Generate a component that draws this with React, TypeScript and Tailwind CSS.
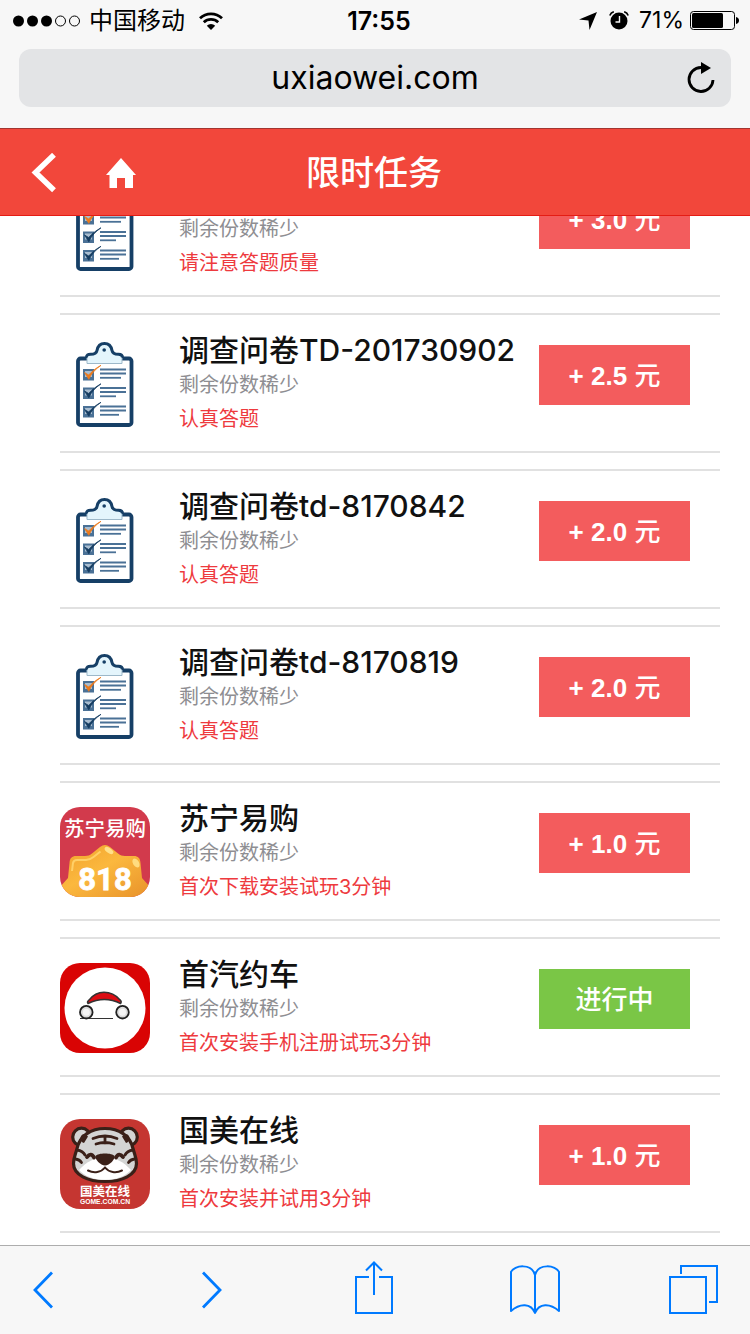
import React from "react";

type IconKind = "survey" | "suning" | "shouqi" | "gome";

interface Task {
  icon: IconKind;
  title: string;
  note: string;
  reward?: string;
}

const tasks: Task[] = [
  { icon: "survey", title: "调查问卷TD-201730903", note: "请注意答题质量", reward: "3.0" },
  { icon: "survey", title: "调查问卷TD-201730902", note: "认真答题", reward: "2.5" },
  { icon: "survey", title: "调查问卷td-8170842", note: "认真答题", reward: "2.0" },
  { icon: "survey", title: "调查问卷td-8170819", note: "认真答题", reward: "2.0" },
  { icon: "suning", title: "苏宁易购", note: "首次下载安装试玩3分钟", reward: "1.0" },
  { icon: "shouqi", title: "首汽约车", note: "首次安装手机注册试玩3分钟" },
  { icon: "gome", title: "国美在线", note: "首次安装并试用3分钟", reward: "1.0" },
];

const cjk = "'Noto Sans CJK SC', sans-serif";

function SurveyIcon() {
  const rows = [30, 48.5, 67];
  return (
    <svg viewBox="0 0 90 90" className="size-[90px]" aria-hidden="true">
      <rect x="18" y="19.5" width="53.5" height="66.5" rx="2.5" fill="#fff" stroke="#163f66" strokeWidth="3.8" />
      <path
        d="M27 24.5v-5c0-2.500 1-3.700 3.500-3.900 3.500-.200 6-.900 6.500-3.800.800-5 3.500-8 7.500-8s6.700 3 7.500 8c.500 2.900 3 3.600 6.500 3.800 2.500.200 3.500 1.400 3.500 3.900v5z"
        fill="#e4f5fc"
      />
      <path
        d="M26.500 18.500c0-2.500 1.500-3.300 4-3.300 4 0 6-1 6.500-3.800.800-4.600 3.500-7 7.500-7s6.700 2.400 7.500 7c.500 2.800 2.500 3.800 6.500 3.800 2.500 0 4 .800 4 3.300"
        fill="none" stroke="#163f66" strokeWidth="3"
      />
      <path d="M27 19v5.500h35V19" fill="none" stroke="#9db8c9" strokeWidth="1" />
      <circle cx="44.200" cy="11" r="1.800" fill="#163f66" />
      {rows.map((y, i) => (
        <g key={y}>
          <rect x="23" y={y} width="11" height="11.500" fill="#4a7196" />
          <rect x="25" y={y + 2} width="7" height="6" fill="#a9bdd0" />
          <path
            d={`M24.500 ${y + 3.500}l4.300 6.800c2.500-5.800 6.500-10 12.200-14-5.400 3-9.200 6.200-12.300 9.700z`}
            fill={i === 0 ? "#ec7a1c" : "#153c61"}
            stroke={i === 0 ? "#ec7a1c" : "#153c61"}
            strokeWidth=".8"
          />
          <path d={`M40 ${y + 0.5}h26M40 ${y + 4.5}h26`} stroke="#4a7196" strokeWidth="1.800" />
          <path d={`M40 ${y + 8.800}h${i === 0 ? 21 : i === 1 ? 16 : 19}`} stroke="#4a7196" strokeWidth="1.800" />
        </g>
      ))}
    </svg>
  );
}

function SuningIcon() {
  return (
    <svg viewBox="0 0 90 90" className="size-[90px] rounded-[20px]" aria-hidden="true">
      <defs>
        <linearGradient id="gold" x1="0" y1="0" x2="1" y2="1">
          <stop offset="0" stopColor="#f0a02c" />
          <stop offset=".45" stopColor="#fbb83e" />
          <stop offset="1" stopColor="#e8922a" />
        </linearGradient>
      </defs>
      <rect width="90" height="90" fill="#d23a4c" />
      <path
        d="M0 80l8-9 1.500-15c.3-5 2.500-7 6.500-7h9c3 0 4.500-.700 7-2.500l8-6.500c3.500-2.700 6.500-2.700 10 0l8 6.500c2.500 1.800 4 2.500 7 2.500h9c4 0 6.200 2 6.500 7L82 71l8 9v10H0z"
        fill="url(#gold)"
      />
      <path d="M12 64l1-8c.5-2 1.500-3 4-3h9c3 0 5-1 7.500-3l7-5.500" fill="none" stroke="#ffd067" strokeWidth="2" />
      <ellipse cx="49" cy="43.500" rx="5" ry="2.500" fill="#ffe08a" transform="rotate(35 49 43.500)" />
      <ellipse cx="76" cy="56" rx="3" ry="5" fill="#ffdc80" transform="rotate(-30 76 56)" />
      <text x="45" y="29" textAnchor="middle" fontFamily={cjk} fontSize="20.500" fontWeight="500" fill="#fff">苏宁易购</text>
      <text
        x="45" y="83" textAnchor="middle"
        fontFamily="Roboto, sans-serif" fontSize="31" fontWeight="700"
        fill="#fff" stroke="#fff" strokeWidth=".8"
      >
        818
      </text>
    </svg>
  );
}

function ShouqiIcon() {
  return (
    <svg viewBox="0 0 90 90" className="size-[90px] rounded-[20px]" aria-hidden="true">
      <rect width="90" height="90" fill="#d90404" />
      <circle cx="45" cy="45" r="40.500" fill="#fff" />
      <path d="M20 55.500h33" stroke="#333" strokeWidth="1" />
      <path
        d="M28 40.500c-1.200-1.500-.3-2.400.9-3.400C33 32 37.500 29.300 44 29.300s12 3 16.100 7.600c1 1 1.700 2 .5 3.600-10.500-5.200-22-5.200-32.600 0z"
        fill="#dc0d14" stroke="#333" strokeWidth="1.500" strokeLinejoin="round"
      />
      <circle cx="26.300" cy="49.200" r="6.300" fill="#dcdcdc" stroke="#202020" strokeWidth="1.800" />
      <circle cx="62.500" cy="49.200" r="6.300" fill="#dcdcdc" stroke="#202020" strokeWidth="1.800" />
      <circle cx="26.300" cy="49.200" r="3.500" fill="#f5f5f5" />
      <circle cx="62.500" cy="49.200" r="3.500" fill="#f5f5f5" />
    </svg>
  );
}

function GomeIcon() {
  return (
    <svg viewBox="0 0 90 90" className="size-[90px] rounded-[20px]" aria-hidden="true">
      <rect width="90" height="90" fill="#c53631" />
      <g fill="#d3d4d3" stroke="#3a2018" strokeWidth="3.200">
        <circle cx="21.500" cy="18" r="8.800" />
        <circle cx="68.500" cy="18" r="8.800" />
        <path d="M45 9.500c-14 0-25 7-28 20-1.500 6-3.500 9-3.500 15C13.500 56 28 62.500 45 62.500S76.500 56 76.500 44.500c0-6-2-9-3.500-15-3-13-14-20-28-20z" />
      </g>
      <path d="M24 24c-4-1-5-6-1.500-8.500 1.500-1 4 .5 5.500 2zM66 24c4-1 5-6 1.500-8.500-1.500-1-4 .5-5.500 2z" fill="#3a2018" />
      <path d="M45 38c-9 0-19 5-26 13 6 6.500 15 9.800 26 9.800s20-3.300 26-9.800c-7-8-17-13-26-13z" fill="#fff" />
      <g fill="none" stroke="#3a2018" strokeWidth="2.800" strokeLinecap="round">
        <path d="M33 19.500q12-5 24 0M36 25q9-3 18 0M45 18v6" />
        <path d="M17 31q6 1 8 5M73 31q-6 1-8 5M15.500 40q4 .5 6 3.500M74.500 40q-4 .5-6 3.500" />
        <path d="M27 38q4-5 7 .5M56 38.500q3-5.500 7-.5" strokeWidth="3.800" />
        <path d="M28 51.500c6 3 13 2 17-3 4 5 11 6 17 3" strokeWidth="2" />
      </g>
      <path d="M35.500 37c2-3.500 17-3.500 19 0 1 3-5 9.500-9.500 9.500S34.500 40 35.500 37z" fill="#3a2018" />
      <text x="45" y="77" textAnchor="middle" fontFamily={cjk} fontSize="12.500" fontWeight="700" fill="#fff">国美在线</text>
      <text x="45" y="84.800" textAnchor="middle" fontFamily="'Liberation Sans', sans-serif" fontSize="6.800" fontWeight="700" fill="#fff">GOME.COM.CN</text>
    </svg>
  );
}

const icons: Record<IconKind, () => React.ReactElement> = {
  survey: SurveyIcon,
  suning: SuningIcon,
  shouqi: ShouqiIcon,
  gome: GomeIcon,
};

function StatusBar() {
  return (
    <div className="grid h-[41px] grid-cols-[1fr_auto_1fr] items-center pr-[11px] pl-[13px] text-2xl">
      <div className="flex items-center">
        <svg viewBox="0 0 68 12" className="h-3 w-[68px]" aria-label="信号">
          <circle cx="5.500" cy="6" r="5.500" />
          <circle cx="19.500" cy="6" r="5.500" />
          <circle cx="33.500" cy="6" r="5.500" />
          <circle cx="47.500" cy="6" r="5" fill="none" stroke="#000" />
          <circle cx="61.500" cy="6" r="5" fill="none" stroke="#000" />
        </svg>
        <span className="ml-2">中国移动</span>
        <svg viewBox="0 0 24 18" className="ml-3.5 h-[18px] w-6" aria-label="Wi-Fi">
          <path d="M1 6.300a16 16 0 0 1 22 0M4.800 10.200a10.500 10.500 0 0 1 14.400 0" fill="none" stroke="#000" strokeWidth="2.800" />
          <path d="M12 18l-4.200-4.300a6 6 0 0 1 8.400 0z" />
        </svg>
      </div>
      <time className="pl-1.5 text-[25px] leading-8 font-semibold">17:55</time>
      <div className="flex items-center justify-end">
        <svg viewBox="0 0 18 18" className="size-[18px]" aria-label="定位">
          <path d="M18 0L10.500 18 9.500 8.500 0 7.500z" />
        </svg>
        <svg viewBox="0 0 20 19" className="ml-3 h-[19px] w-5" aria-label="闹钟">
          <circle cx="10" cy="10" r="8.500" />
          <path d="M.8 4.500a6 6 0 0 1 4-3.800M19.200 4.500a6 6 0 0 0-4-3.800" fill="none" stroke="#000" strokeWidth="1.600" />
          <path d="M10.500 5v6H6.500" fill="none" stroke="#f7f7f7" strokeWidth="1.400" />
        </svg>
        <span className="mr-1.5 ml-2.5 text-[23px]">71%</span>
        <svg viewBox="0 0 49 19" className="h-[19px] w-[49px]" aria-label="电量">
          <rect x=".5" y=".5" width="44" height="18" rx="3" fill="none" stroke="#000" />
          <rect x="2" y="2" width="31" height="15" rx="1.500" />
          <path d="M46 6c4 .5 4 6.500 0 7z" />
        </svg>
      </div>
    </div>
  );
}

function TaskRow({ task }: { task: Task }) {
  const Icon = icons[task.icon];
  return (
    <li className="flex h-[140px] shrink-0 items-start border-y-2 border-[#e1e1e1] pr-[30px]">
      <div className="mt-6 shrink-0">
        <Icon />
      </div>
      <div className="ml-[29px] min-w-0 flex-1 pt-[19px] text-xl leading-[34px] whitespace-nowrap">
        <h2 className="mb-0.5 text-[30px] leading-8 font-medium text-[#111]">{task.title}</h2>
        <p className="text-[#8e8e92]">剩余份数稀少</p>
        <p className="text-[#ee3a3e]">{task.note}</p>
      </div>
      <button
        type="button"
        className={`mt-[30px] h-[60px] w-[151px] shrink-0 pt-0.5 font-['Liberation_Sans','Noto_Sans_CJK_SC',sans-serif] text-[26px] font-medium text-white ${
          task.reward ? "bg-[#f35c5d]" : "bg-[#7ac646]"
        }`}
      >
        {task.reward ? (
          <>
            <b className="font-bold">+ {task.reward}</b> 元
          </>
        ) : (
          "进行中"
        )}
      </button>
    </li>
  );
}

export default function App() {
  return (
    <div className="flex h-screen flex-col bg-white font-[Inter,'Noto_Sans_CJK_SC',sans-serif] text-black">
      <header className="shrink-0 bg-[#f7f7f7]">
        <StatusBar />
        <div className="px-[19px] pt-2 pb-[21px]">
          <div className="grid h-[58px] grid-cols-[1fr_auto_1fr] items-center rounded-xl bg-[#e3e4e6] px-4">
            <span className="col-start-2 text-[32px] leading-[58px]">uxiaowei.com</span>
            <button type="button" aria-label="刷新" className="justify-self-end">
              <svg viewBox="0 0 28 32" className="h-8 w-7">
                <path d="M14 5.500A12 12 0 1 0 26 18" fill="none" stroke="#000" strokeWidth="2.800" />
                <path d="M14 0l10 6-10 6z" />
              </svg>
            </button>
          </div>
        </div>
      </header>

      <nav className="grid h-[88px] shrink-0 grid-cols-[1fr_auto_1fr] items-center border-t border-b border-t-[#a23530] border-b-[#e51c14] bg-[#f2473b] pt-0.5 pr-8 pl-[30px] text-white">
        <div className="flex items-center gap-[50px]">
          <button type="button" aria-label="返回">
            <svg viewBox="0 0 26 40" className="h-10 w-[26px]">
              <path d="M24 1.800L5.500 19.500 24 37.200" fill="none" stroke="#fff" strokeWidth="5.500" />
            </svg>
          </button>
          <a href="#home" aria-label="首页">
            <svg viewBox="0 0 30 30" className="size-[30px]">
              <path d="M15 0l15 17h-3v13h-8V20h-8v10H3.500V17H0z" fill="#fff" />
            </svg>
          </a>
        </div>
        <h1 className="text-[34px] leading-[52px] font-medium">限时任务</h1>
      </nav>

      <main className="flex min-h-0 flex-1 flex-col justify-end overflow-hidden pr-[30px] pb-3 pl-[60px]">
        <ul className="flex flex-col gap-4">
          {tasks.map((task) => (
            <TaskRow key={task.title} task={task} />
          ))}
        </ul>
      </main>

      <footer className="grid h-[89px] shrink-0 grid-cols-[169fr_152fr_156fr_159fr_50fr] items-center justify-items-start border-t border-[#adadad] bg-[#f7f7f7] pr-[31px] pl-[33px]">
        <button type="button" aria-label="后退">
          <svg viewBox="0 0 20 56" className="h-14 w-5" fill="none" stroke="#007aff" strokeWidth="2.800">
            <path d="M19 10.500L2 28l17 17.500" />
          </svg>
        </button>
        <button type="button" aria-label="前进">
          <svg viewBox="0 0 20 56" className="h-14 w-5" fill="none" stroke="#007aff" strokeWidth="2.800">
            <path d="M1 10.500L18 28 1 45.500" />
          </svg>
        </button>
        <button type="button" aria-label="分享">
          <svg viewBox="0 0 40 56" className="h-14 w-10 overflow-visible" fill="none" stroke="#007aff" strokeWidth="2">
            <path d="M15 15H2v36h36V15H25M20 33V1M12 8.500l8-8 8 8" />
          </svg>
        </button>
        <button type="button" aria-label="书签">
          <svg viewBox="0 -1 50 56" className="h-14 w-[50px]" fill="none" stroke="#007aff" strokeWidth="2" strokeLinejoin="round">
            <path d="M25 50c-4-10-15-10-24-2V9C4 2 22 0 25 12 28 0 46 2 49 9v39c-9-8-20-8-24 2zV12" />
          </svg>
        </button>
        <button type="button" aria-label="标签页">
          <svg viewBox="0 -1 50 56" className="h-14 w-[50px]" fill="none" stroke="#007aff" strokeWidth="2">
            <path d="M1 14h36v36H1zM12 11V3h36v36h-8" />
          </svg>
        </button>
      </footer>
    </div>
  );
}
